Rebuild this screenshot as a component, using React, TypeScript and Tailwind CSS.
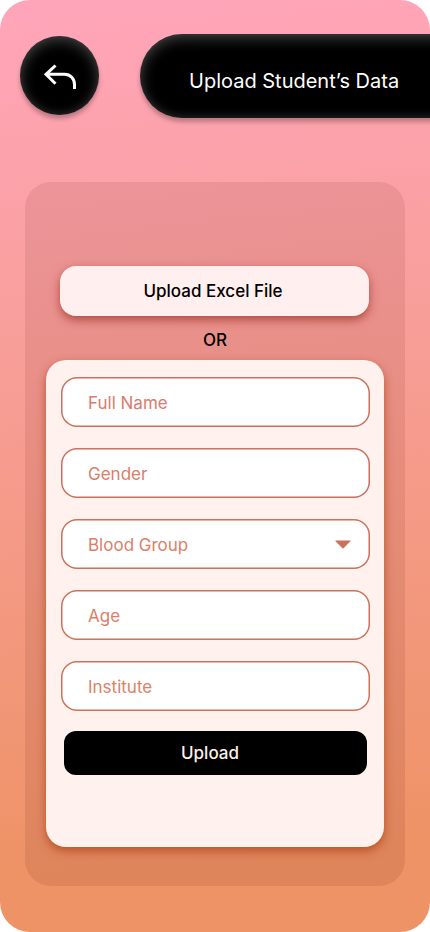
const fieldClass =
  "flex h-[50px] w-[309px] items-center justify-between rounded-2xl bg-white pl-[27px] pr-[19px] text-[17px] leading-5 pt-[2px]";

const fields = [
  { label: "Full Name", color: "text-[#da7c6d]", ring: "shadow-[inset_0_0_0_1.5px_#c9705f]" },
  { label: "Gender", color: "text-[#da7d6b]", ring: "shadow-[inset_0_0_0_1.5px_#ca705e]" },
  { label: "Blood Group", color: "text-[#da7f69]", ring: "shadow-[inset_0_0_0_1.5px_#cb715b]", select: true },
  { label: "Age", color: "text-[#da8067]", ring: "shadow-[inset_0_0_0_1.5px_#cc7258]" },
  { label: "Institute", color: "text-[#da8265]", ring: "shadow-[inset_0_0_0_1.5px_#cc7355]" },
];

const raised =
  "bg-black shadow-[0_4px_4px_rgba(0,0,0,0.25),inset_0_4px_14px_rgba(255,255,255,0.25),inset_0_-2px_10px_rgba(255,255,255,0.06)]";

export default function App() {
  return (
    <div className="h-[932px] w-[430px] overflow-hidden bg-white font-['Inter','Liberation_Sans',sans-serif]">
      <main className="flex h-full w-full flex-col overflow-hidden rounded-[30px] bg-[linear-gradient(175deg,#ffa5b9_2%,#ee9366_90%)]">
        <header className="flex h-[182px] shrink-0 items-start pl-5 pt-[34px]">
          <button aria-label="Back" className={`mt-[2px] flex size-[79px] shrink-0 items-center justify-center rounded-full ${raised}`}>
            <svg width="79" height="79" viewBox="0 0 79 79" fill="none" stroke="white" strokeWidth="3">
              <path d="M35.5 29.5 26 38.3l9.5 9.4M26 38.3h18.5c6 0 10 4.500 10 10.200V53" />
            </svg>
          </button>
          <h1 className={`ml-[41px] flex h-[84px] w-[340px] shrink-0 items-center whitespace-nowrap rounded-l-full pl-[49px] pt-[9px] text-[20px] leading-6 text-white ${raised}`}>
            Upload Student’s Data
          </h1>
        </header>
        <section className="ml-[25px] flex h-[704px] w-[380px] shrink-0 flex-col rounded-[26px] bg-[linear-gradient(160deg,rgba(128,48,48,0.12),rgba(128,48,30,0.14))] pt-[84px]">
          <button className="ml-[35px] h-[50px] w-[309px] shrink-0 rounded-2xl bg-[#fff0ef] pr-[3px] text-[17px] font-medium leading-5 text-black shadow-[0_4px_10px_rgba(164,58,46,0.8)]">
            Upload Excel File
          </button>
          <div className="flex h-11 shrink-0 items-center justify-center pt-[3px] text-[17px] font-medium leading-5 text-black">OR</div>
          <form className="ml-[21px] flex h-[487px] w-[338px] shrink-0 flex-col rounded-[20px] bg-[#fff1ee] pl-[15px] pt-[17px] shadow-[0_4px_10px_rgba(174,70,28,0.8)]">
            <div className="flex flex-col gap-[21px]">
              {fields.map((field) => (
                <div key={field.label} className={`${fieldClass} ${field.color} ${field.ring}`}>
                  <span>{field.label}</span>
                  {field.select && (
                    <svg width="16" height="10" viewBox="0 0 16 10" className="text-[#cb715b]">
                      <path d="M1 0.500h14q1 0 .4.800L8.600 8.300q-.6.600-1.200 0L.600 1.300Q0 .500 1 .500Z" fill="currentColor" />
                    </svg>
                  )}
                </div>
              ))}
            </div>
            <button type="button" className="ml-[3px] mt-5 h-11 w-[303px] rounded-xl bg-black pr-[11px] text-[17px] font-medium leading-5 text-[#fff1e8]">
              Upload
            </button>
          </form>
        </section>
      </main>
    </div>
  );
}
